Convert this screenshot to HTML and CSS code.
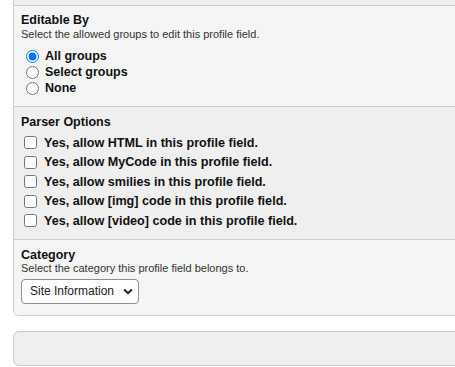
FILE: index.html
```html
<!DOCTYPE html>
<html>
<head>
<meta charset="utf-8">
<link rel="stylesheet" href="styles.css">
</head>
<body>
<div class="page">
  <div class="table">
    <div class="row row-alt row-prev"></div>
    <div class="row row-first">
      <div class="heading">Editable By</div>
      <div class="desc">Select the allowed groups to edit this profile field.</div>
      <div class="radios">
        <label class="opt"><input type="radio" name="editable" checked><span>All groups</span></label>
        <label class="opt"><input type="radio" name="editable"><span>Select groups</span></label>
        <label class="opt"><input type="radio" name="editable"><span>None</span></label>
      </div>
    </div>
    <div class="row row-alt row-parser">
      <div class="heading">Parser Options</div>
      <div class="checks">
        <label class="chk"><input type="checkbox"><span>Yes, allow HTML in this profile field.</span></label>
        <label class="chk"><input type="checkbox"><span>Yes, allow MyCode in this profile field.</span></label>
        <label class="chk"><input type="checkbox"><span>Yes, allow smilies in this profile field.</span></label>
        <label class="chk"><input type="checkbox"><span>Yes, allow [img] code in this profile field.</span></label>
        <label class="chk"><input type="checkbox"><span>Yes, allow [video] code in this profile field.</span></label>
      </div>
    </div>
    <div class="row row-last">
      <div class="heading">Category</div>
      <div class="desc desc-tight">Select the category this profile field belongs to.</div>
      <select class="select">
        <option>Site Information</option>
      </select>
    </div>
  </div>
  <div class="buttons"></div>
</div>
</body>
</html>
```
FILE: styles.css
```css
html, body {
  margin: 0;
  padding: 0;
  overflow: hidden;
  background: #fff;
}
body {
  font-family: "Liberation Sans", Arial, sans-serif;
  color: #333;
}
.page {
  padding-left: 13px;
  width: 520px;
}
.table {
  border: 1px solid #ccc;
  border-top: none;
  border-radius: 0 0 6px 6px;
  overflow: hidden;
}
.row {
  background: #f5f5f5;
  border-top: 1px solid #ccc;
  padding: 0 7px;
}
.row-alt {
  background: #efefef;
}
.row-prev {
  height: 5px;
  padding: 0;
  border-top: none;
}
.row-first {
  padding-top: 7px;
  padding-bottom: 10px;
}
.row-parser {
  padding-top: 8px;
  padding-bottom: 8px;
}
.row-last {
  padding-top: 8px;
  padding-bottom: 11px;
}
.heading {
  font-weight: bold;
  font-size: 12.5px;
  line-height: 15px;
  color: #111;
}
.desc {
  font-size: 11px;
  line-height: 13px;
  color: #333;
}
.desc-tight {
  margin-top: -1px;
}
.radios {
  display: flex;
  flex-direction: column;
  margin-top: 7px;
}
.opt, .chk {
  display: flex;
  align-items: center;
  font-weight: bold;
  font-size: 12.5px;
  color: #111;
}
.opt {
  height: 16px;
}
.opt input {
  margin: 0 6px 0 5px;
  width: 13px;
  height: 13px;
}
.checks {
  display: flex;
  flex-direction: column;
  margin-top: 3px;
}
.chk {
  height: 19.5px;
  font-size: 12.6px;
}
.chk input {
  margin: 0 7px 0 3px;
  width: 13px;
  height: 13px;
}
.select {
  -webkit-appearance: none;
  appearance: none;
  margin-top: 4px;
  width: 118px;
  height: 25px;
  padding: 0 0 0 8px;
  font-family: "Liberation Sans", Arial, sans-serif;
  font-size: 12px;
  color: #222;
  background: #fff url("data:image/svg+xml,%3Csvg xmlns='http://www.w3.org/2000/svg' width='10' height='7' viewBox='0 0 10 7'%3E%3Cpath d='M1.2 1.5 L5 5.2 L8.8 1.5' fill='none' stroke='%23222' stroke-width='2'/%3E%3C/svg%3E") no-repeat right 5px center;
  border: 1px solid #8f8f8f;
  border-radius: 4px;
  display: block;
}
.buttons {
  margin-top: 15px;
  height: 33px;
  background: #efefef;
  border: 1px solid #ccc;
  border-radius: 6px;
}
```
